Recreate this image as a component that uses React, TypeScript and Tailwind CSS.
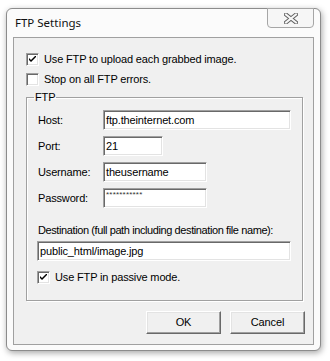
import React from "react";

const sunken =
  "border border-t-[#a0a0a0] border-l-[#a0a0a0] border-b-white border-r-white shadow-[inset_1px_1px_0_#696969,inset_-1px_-1px_0_#e3e3e3] bg-white";

function CheckBox({ checked }: { checked?: boolean }) {
  return (
    <span className={`w-[13px] h-[13px] shrink-0 flex items-center justify-center ${sunken}`}>
      {checked && (
        <svg width="7" height="7" viewBox="0 0 7 7">
          <path d="M0 2 L0 4 L2 6 L7 1 L7 -1 L2 4 Z" fill="#000" />
        </svg>
      )}
    </span>
  );
}

function Check({ checked, label }: { checked?: boolean; label: string }) {
  return (
    <label className="flex items-center gap-[5px] h-[13px]">
      <CheckBox checked={checked} />
      <span className="leading-[13px]">{label}</span>
    </label>
  );
}

function Field({ value, width, small }: { value: string; width: string; small?: boolean }) {
  return (
    <div className={`h-[20px] ${width} ${sunken} pl-[2px] flex ${small ? "items-start pt-[2px]" : "items-center"}`}>
      <span className={small ? "text-[8px] leading-[8px] tracking-[0.2px] text-[#333]" : "leading-[13px]"}>{value}</span>
    </div>
  );
}

function Row({ label, children }: { label: string; children: React.ReactNode }) {
  return (
    <div className="flex items-center">
      <span className="w-[65px] leading-[13px]">{label}</span>
      {children}
    </div>
  );
}

function Btn({ label }: { label: string }) {
  return (
    <button className="w-[75px] h-[23px] bg-[#f0f0f0] border border-t-white border-l-white border-b-[#696969] border-r-[#696969] shadow-[inset_-1px_-1px_0_#a0a0a0,inset_1px_1px_0_#e3e3e3] flex items-center justify-center leading-[13px]">
      {label}
    </button>
  );
}

export default function App() {
  return (
    <div className="w-[330px] h-[361px] bg-white pl-[6px] pt-[8px] text-[11px] tracking-[-0.15px] text-black font-['Liberation_Sans',Arial,sans-serif]">
      <div className="w-[315px] h-[343px] flex flex-col bg-[#fbfbfb] border border-[#8c8c8c] rounded-[6px] shadow-[1px_2px_6px_rgba(0,0,0,0.35)]">
        {/* title bar */}
        <div className="h-[28px] flex items-start justify-between pl-[8px] pr-[6px]">
          <span className="mt-[6px] text-[11.5px] leading-[16px] tracking-normal font-['Noto_Sans',sans-serif] text-[#111]">FTP Settings</span>
          <div className="w-[47px] h-[20px] -mt-px border border-[#a6a6a6] rounded-b-[4px] bg-[#f6f6f6] flex items-center justify-center">
            <svg width="14" height="11" viewBox="0 0 14 11">
              <path d="M2 1.5 L12 9.5 M12 1.5 L2 9.5" stroke="#5f5f5f" strokeWidth="4" strokeLinecap="square" />
              <path d="M2 1.5 L12 9.5 M12 1.5 L2 9.5" stroke="#f6f6f6" strokeWidth="2" strokeLinecap="square" />
            </svg>
          </div>
        </div>

        {/* client area */}
        <div className="mx-[6px] h-[308px] border border-[#a0a0a0] bg-[#f0f0f0] pt-[15px] pl-[12px] flex flex-col">
          <div className="flex flex-col gap-[7px]">
            <Check checked label="Use FTP to upload each grabbed image." />
            <Check label="Stop on all FTP errors." />
          </div>

          <fieldset className="mt-[5px] w-[277px] border border-[#a0a0a0] shadow-[inset_1px_1px_0_white,1px_1px_0_white] pl-[11px] pb-[16px] pt-[6px]">
            <legend className="-ml-[4px] px-[1px] leading-[13px]">FTP</legend>
            <div className="flex flex-col gap-[6px]">
              <Row label="Host:">
                <Field value="ftp.theinternet.com" width="w-[188px]" />
              </Row>
              <Row label="Port:">
                <Field value="21" width="w-[60px]" />
              </Row>
              <Row label="Username:">
                <Field value="theusername" width="w-[104px]" />
              </Row>
              <Row label="Password:">
                <Field value="***********" width="w-[104px]" small />
              </Row>
            </div>
            <div className="mt-[16px] leading-[13px] tracking-[-0.4px]">Destination (full path including destination file name):</div>
            <div className="mt-[4px] -ml-[1px]">
              <Field value="public_html/image.jpg" width="w-[254px]" />
            </div>
            <div className="mt-[10px] -ml-[1px]">
              <Check checked label="Use FTP in passive mode." />
            </div>
          </fieldset>

          <div className="mt-[10px] flex justify-end gap-[9px] pr-[8px]">
            <Btn label="OK" />
            <Btn label="Cancel" />
          </div>
        </div>
      </div>
    </div>
  );
}
